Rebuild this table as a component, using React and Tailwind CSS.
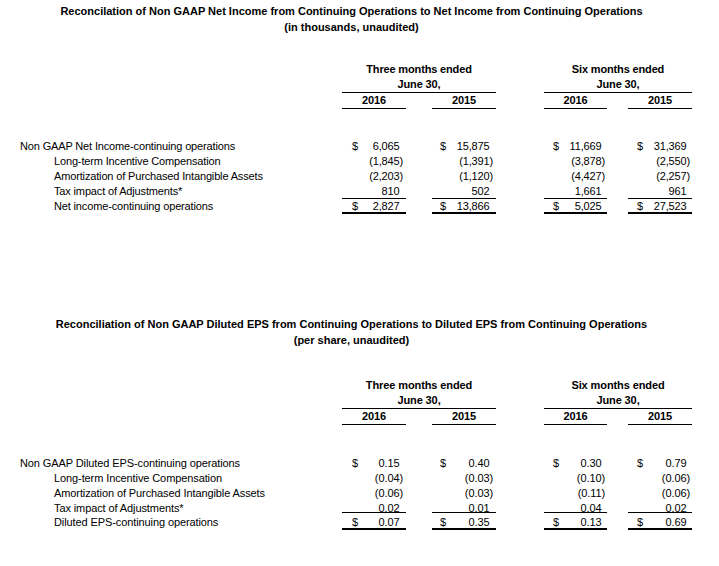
import React from "react";

const cols = [
  { w: "w-[64px]", pad: "pl-[10px] pr-[3px]" },
  { w: "w-[64px]", pad: "pl-[8px] pr-[3px]" },
  { w: "w-[63px]", pad: "pl-[9px] pr-[2px]" },
  { w: "w-[64px]", pad: "pl-[9px] pr-[2px]" },
];
const gaps = ["w-[26px]", "w-[48px]", "w-[21px]"];

const incomeRows = [
  { label: "Non GAAP Net Income-continuing operations", indent: false, dollar: true, vals: ["6,065", "15,875", "11,669", "31,369"] },
  { label: "Long-term Incentive Compensation", indent: true, vals: ["(1,845)", "(1,391)", "(3,878)", "(2,550)"] },
  { label: "Amortization of Purchased Intangible Assets", indent: true, vals: ["(2,203)", "(1,120)", "(4,427)", "(2,257)"] },
  { label: "Tax impact of Adjustments*", indent: true, vals: ["810", "502", "1,661", "961"], line: "single" },
  { label: "Net income-continuing operations", indent: true, dollar: true, vals: ["2,827", "13,866", "5,025", "27,523"], line: "double" },
];

const epsRows = [
  { label: "Non GAAP Diluted EPS-continuing operations", indent: false, dollar: true, vals: ["0.15", "0.40", "0.30", "0.79"] },
  { label: "Long-term Incentive Compensation", indent: true, vals: ["(0.04)", "(0.03)", "(0.10)", "(0.06)"] },
  { label: "Amortization of Purchased Intangible Assets", indent: true, vals: ["(0.06)", "(0.03)", "(0.11)", "(0.06)"] },
  { label: "Tax impact of Adjustments*", indent: true, vals: ["0.02", "0.01", "0.04", "0.02"], line: "single", short: true },
  { label: "Diluted EPS-continuing operations", indent: true, dollar: true, vals: ["0.07", "0.35", "0.13", "0.69"], line: "double", lift: true },
];

function Value({ v }) {
  if (v.startsWith("(")) return <span>{v}</span>;
  return (
    <span>
      {v}
      <span className="invisible">)</span>
    </span>
  );
}

function DataRow({ row }) {
  const border =
    row.line === "single" ? "border-b border-black" : row.line === "double" ? "border-b-2 border-black" : "";
  const height = row.short ? "h-[12px]" : row.lift ? "h-[17px] pt-[2px]" : "h-[15px]";
  return (
    <div className={`flex ${height} leading-[15px]`}>
      <div className={`w-[342px] ${row.indent ? "pl-[54px]" : "pl-[20px]"}`}>{row.label}</div>
      {cols.map((c, i) => (
        <React.Fragment key={i}>
          {i > 0 && <div className={gaps[i - 1]} />}
          <div className={`${c.w} ${c.pad} ${border} flex justify-between`}>
            <span>{row.dollar ? "$" : ""}</span>
            <Value v={row.vals[i]} />
          </div>
        </React.Fragment>
      ))}
    </div>
  );
}

function Header() {
  return (
    <div className="leading-[15px] font-bold">
      <div className="flex">
        <div className="w-[342px]" />
        <div className="w-[154px] text-center border-b border-black">
          <div>Three months ended</div>
          <div>June 30,</div>
        </div>
        <div className="w-[48px]" />
        <div className="w-[148px] text-center border-b border-black">
          <div>Six months ended</div>
          <div>June 30,</div>
        </div>
      </div>
      <div className="flex h-[16px]">
        <div className="w-[342px]" />
        {cols.map((c, i) => (
          <React.Fragment key={i}>
            {i > 0 && <div className={gaps[i - 1]} />}
            <div className={`${c.w} text-center border-b border-black`}>{i % 2 === 0 ? "2016" : "2015"}</div>
          </React.Fragment>
        ))}
      </div>
    </div>
  );
}

function Section({ title, sub, rows, top, headTop, dataTop, tracking }) {
  return (
    <div className={top}>
      <div className="text-center font-bold leading-[16px] pr-[16px]">
        <div>{title}</div>
        <div>{sub}</div>
      </div>
      <div className={tracking}>
        <div className={headTop}>
          <Header />
        </div>
        <div className={dataTop}>
          {rows.map((r, i) => (
            <DataRow key={i} row={r} />
          ))}
        </div>
      </div>
    </div>
  );
}

export default function App() {
  return (
    <div className="w-[719px] h-[566px] bg-white text-black text-[11px] font-['Liberation_Sans',Arial,sans-serif] overflow-hidden">
      <Section
        top="pt-[3px]"
        tracking="tracking-[-0.15px]"
        title="Reconcilation of Non GAAP Net Income from Continuing Operations to Net Income from Continuing Operations"
        sub="(in thousands, unaudited)"
        rows={incomeRows}
        headTop="mt-[27px]"
        dataTop="mt-[30px]"
      />
      <Section
        top="mt-[102px]"
        tracking="tracking-[-0.1px]"
        title="Reconciliation of Non GAAP Diluted EPS from Continuing Operations to Diluted EPS from Continuing Operations"
        sub="(per share, unaudited)"
        rows={epsRows}
        headTop="mt-[30px]"
        dataTop="mt-[31px]"
      />
    </div>
  );
}
